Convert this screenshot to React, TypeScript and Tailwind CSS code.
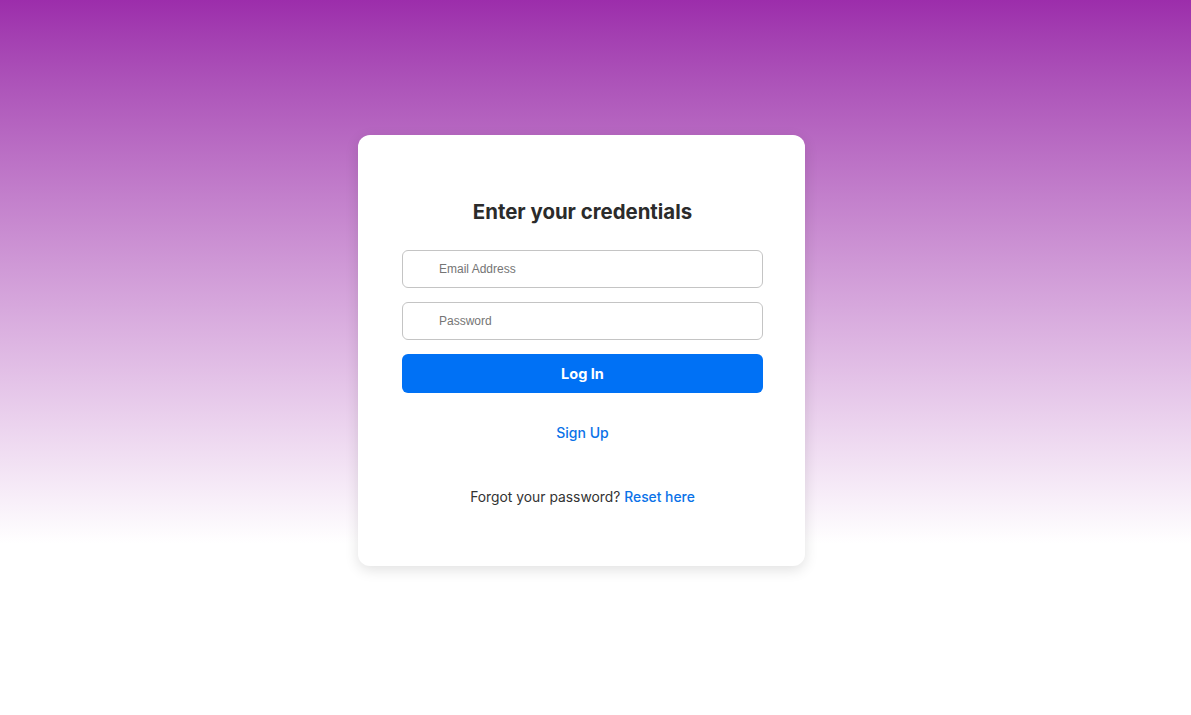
export default function App() {
  return (
    <div className="min-h-screen w-full bg-linear-to-b from-[#9c2dab] to-white to-[76%] font-['Inter',sans-serif]">
      <div className="flex justify-center pt-[135px] pr-[28px]">
        <div className="w-[447px] rounded-xl bg-white pl-[44px] pr-[42px] pt-[63px] pb-[59px] shadow-[0_4px_14px_rgba(0,0,0,0.12)]">
          <h1 className="text-center text-[20.4px] leading-7 font-bold text-[#2b2b2b]">Enter your credentials</h1>

          <form className="mt-6 flex flex-col gap-[14px]" onSubmit={(e) => e.preventDefault()}>
            <input
              type="email"
              placeholder="Email Address"
              className="h-[38px] w-full rounded-md border border-[#c4c4c4] pl-[36px] text-[12px] font-['Liberation_Sans',sans-serif] text-[#333] placeholder:text-[#757575] outline-none"
            />
            <input
              type="password"
              placeholder="Password"
              className="h-[38px] w-full rounded-md border border-[#c4c4c4] pl-[36px] text-[12px] font-['Liberation_Sans',sans-serif] text-[#333] placeholder:text-[#757575] outline-none"
            />
            <button
              type="submit"
              className="h-[39px] w-full rounded-md bg-[#0071f5] text-[14.5px] font-bold text-white"
            >
              Log In
            </button>
          </form>

          <div className="mt-[30px] text-center text-[14px] leading-5">
            <a href="#" className="font-medium text-[#0a72e8]">Sign Up</a>
          </div>

          <p className="mt-[44px] text-center text-[13.85px] leading-5 text-[#333]">
            Forgot your password? <a href="#" className="font-medium text-[#0a72e8]">Reset here</a>
          </p>
        </div>
      </div>
    </div>
  );
}
